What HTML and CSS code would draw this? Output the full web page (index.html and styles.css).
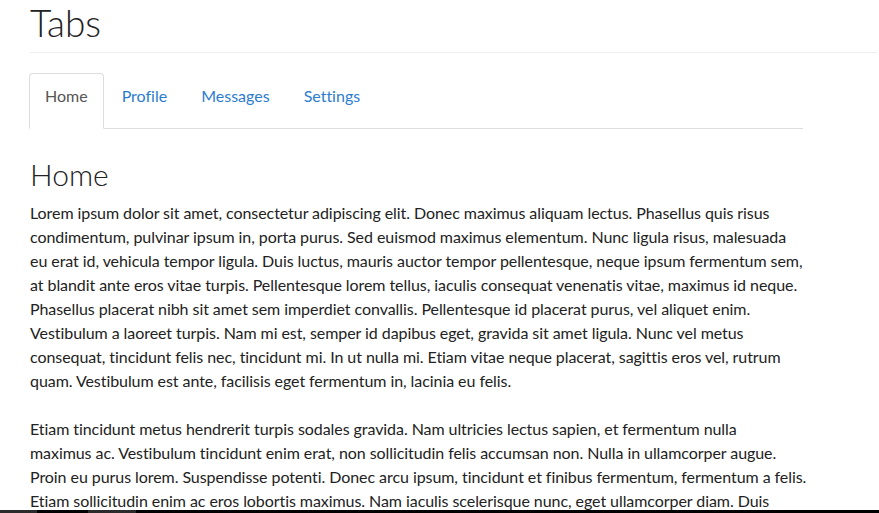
FILE: index.html
```html
<!DOCTYPE html>
<html lang="en">
<head>
<meta charset="utf-8">
<title>Tabs</title>
<link rel="stylesheet" href="styles.css">
</head>
<body>
<div class="page">
  <div class="page-header">
    <h1 class="title">Tabs</h1>
  </div>
  <div class="content">
    <ul class="nav-tabs">
      <li class="tab active"><a href="#home">Home</a></li>
      <li class="tab"><a href="#profile">Profile</a></li>
      <li class="tab"><a href="#messages">Messages</a></li>
      <li class="tab"><a href="#settings">Settings</a></li>
    </ul>
    <div class="tab-pane">
      <h2 class="pane-title">Home</h2>
      <p>Lorem ipsum dolor sit amet, consectetur adipiscing elit. Donec maximus aliquam lectus. Phasellus quis risus condimentum, pulvinar ipsum in, porta purus. Sed euismod maximus elementum. Nunc ligula risus, malesuada eu erat id, vehicula tempor ligula. Duis luctus, mauris auctor tempor pellentesque, neque ipsum fermentum sem, at blandit ante eros vitae turpis. Pellentesque lorem tellus, iaculis consequat venenatis vitae, maximus id neque. Phasellus placerat nibh sit amet sem imperdiet convallis. Pellentesque id placerat purus, vel aliquet enim. Vestibulum a laoreet turpis. Nam mi est, semper id dapibus eget, gravida sit amet ligula. Nunc vel metus consequat, tincidunt felis nec, tincidunt mi. In ut nulla mi. Etiam vitae neque placerat, sagittis eros vel, rutrum quam. Vestibulum est ante, facilisis eget fermentum in, lacinia eu felis.</p>
      <p class="wide">Etiam tincidunt metus hendrerit turpis sodales gravida. Nam ultricies lectus sapien, et fermentum nulla<br>maximus ac. Vestibulum tincidunt enim erat, non sollicitudin felis accumsan non. Nulla in ullamcorper augue.<br>Proin eu purus lorem. Suspendisse potenti. Donec arcu ipsum, tincidunt et finibus fermentum, fermentum a felis.<br>Etiam sollicitudin enim ac eros lobortis maximus. Nam iaculis scelerisque nunc, eget ullamcorper diam. Duis<br>ultrices, ligula nec aliquet congue, ipsum turpis tincidunt nisl, a dapibus metus lorem ac velit. Praesent vitae magna vel nisi viverra ultricies.</p>
    </div>
  </div>
</div>
<div class="bottom-bar">
  <span class="seg seg-a"></span><span class="seg seg-b"></span><span class="seg seg-c"></span><span class="seg seg-d"></span>
</div>
</body>
</html>
```
FILE: styles.css
```css
html, body {
  margin: 0;
  padding: 0;
  background: #fff;
  overflow: hidden;
}
body {
  font-family: "Lato", "Open Sans", sans-serif;
  font-size: 16px;
  line-height: 24px;
  color: #222;
  font-variant-ligatures: none;
}
.page {
  padding: 0 2px 0 30px;
}
.page-header {
  padding-bottom: 9px;
  border-bottom: 1px solid #eee;
  margin-bottom: 20px;
}
.title {
  margin: 0;
  padding-top: 3px;
  font-size: 37px;
  line-height: 40px;
  font-weight: 300;
  color: #222;
}
.content {
  width: 773px;
}
.nav-tabs {
  list-style: none;
  margin: 0 0 0 -1px;
  padding: 0;
  display: flex;
  gap: 2px;
  border-bottom: 1px solid #ddd;
}
.tab {
  margin-bottom: -1px;
}
.tab a {
  display: block;
  padding: 10px 15px 20px;
  border: 1px solid transparent;
  border-radius: 4px 4px 0 0;
  color: #2c7cd0;
  text-decoration: none;
  line-height: 24px;
}
.tab.active a {
  color: #555;
  background: #fff;
  border-color: #ddd #ddd transparent;
}
.tab-pane {
  padding-top: 27px;
  margin-right: -4px;
}
.pane-title {
  margin: 0 0 9px;
  font-size: 30px;
  line-height: 36px;
  font-weight: 300;
  color: #222;
}
.tab-pane p {
  margin: 0 0 24px;
  letter-spacing: -0.065px;
}
.tab-pane p.wide {
  margin-right: -44px;
}
.bottom-bar {
  position: fixed;
  left: 0;
  right: 0;
  bottom: 0;
  height: 3px;
  display: flex;
  background: #000;
}
.seg { display: block; height: 100%; }
.seg-a { width: 37px; background: #2b2b2b; }
.seg-b { width: 51px; background: #000; }
.seg-c { width: 48px; background: #2b2b2b; }
.seg-d { flex: 1; background: #000; }
```
